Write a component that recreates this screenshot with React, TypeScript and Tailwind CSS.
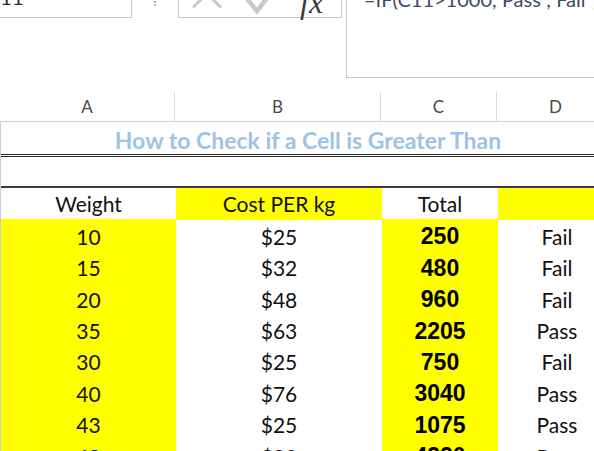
const rows = [
  ['10', '$25', '250', 'Fail'],
  ['15', '$32', '480', 'Fail'],
  ['20', '$48', '960', 'Fail'],
  ['35', '$63', '2205', 'Pass'],
  ['30', '$25', '750', 'Fail'],
  ['40', '$76', '3040', 'Pass'],
  ['43', '$25', '1075', 'Pass'],
  ['48', '$90', '4320', 'Pass'],
];

const cols = 'grid grid-cols-[175px_206px_116px_118px]';

function FormulaBar() {
  return (
    <div className="flex items-start h-[106px] -mt-[14px]">
      {/* name box */}
      <div className="flex items-start w-[132px] h-[32px] border-r border-b border-[#c6c6c6]">
        <span className="-ml-[13px] pt-[1px] text-[20px] leading-[20px] text-[#1f2a44]">C11</span>
        <svg className="ml-auto mr-[11px] mt-[9px]" width="8" height="6" viewBox="0 0 8 6">
          <path d="M1 1 L4 4.5 L7 1" fill="none" stroke="#8a8a8a" strokeWidth="1.3" />
        </svg>
      </div>
      {/* grip dots */}
      <div className="ml-[22px] mt-[11px] flex flex-col gap-[1.5px]">
        <span className="w-[2px] h-[2px] rounded-full bg-[#9a9a9a]" />
        <span className="w-[2px] h-[2px] rounded-full bg-[#9a9a9a]" />
        <span className="w-[2px] h-[2px] rounded-full bg-[#9a9a9a]" />
      </div>
      {/* cancel / enter / fx */}
      <div className="ml-[22px] flex items-start w-[164px] h-[32px] border-l border-r border-b border-[#c6c6c6]">
        <svg width="100" height="32" viewBox="0 0 100 32">
          <path d="M14 -6.5 L42 21.5 M42 -6.5 L14 21.5" stroke="#c8c8c8" strokeWidth="3" fill="none" />
          <path d="M64 8 L78 25 L97 0" stroke="#c8c8c8" strokeWidth="4.5" fill="none" strokeLinejoin="miter" />
        </svg>
        <span className="ml-[21px] font-['Liberation_Serif',serif] italic text-[32px] leading-[32px] text-[#3a3a3a]">fx</span>
      </div>
      {/* formula box */}
      <div className="ml-[4px] flex-1 h-[92px] border-l border-b border-[#c6c6c6] pl-[17px] pt-[3px] overflow-hidden whitespace-nowrap">
        <span className="text-[20px] leading-[20px] text-[#3b4b63]">=IF(C11&gt;1000,"Pass","Fail")</span>
      </div>
    </div>
  );
}

export default function App() {
  return (
    <div className="w-[594px] h-[451px] overflow-hidden bg-white font-['Lato',sans-serif] text-[#111]">
      <FormulaBar />

      {/* column headers */}
      <div className={`${cols} h-[30px] border-b border-[#cfcfcf] text-[17px] text-[#4a4a4a]`}>
        {['A', 'B', 'C', 'D'].map(c => (
          <div key={c} className="flex items-center justify-center border-r border-[#dadada]">{c}</div>
        ))}
      </div>

      <div className="w-[615px] border-l border-[#c8cade]">
        {/* title */}
        <div className="h-[32px] flex items-center justify-center pt-[4px] text-[23px] font-bold text-[#9dc3e6] whitespace-nowrap">
          How to Check if a Cell is Greater Than
        </div>
        <div className="h-[3px] border-y border-[#2a2a2a]" />
        <div className="h-[29px]" />
        <div className="h-[2px] bg-[#3a3a3a]" />

        {/* header row */}
        <div className={`${cols} h-[31.4px] text-[21px]`}>
          <div className="flex items-center justify-center">Weight</div>
          <div className="flex items-center justify-center bg-[#ffff00]">Cost PER kg</div>
          <div className="flex items-center justify-center">Total</div>
          <div className="bg-[#ffff00]" />
        </div>

        {rows.map(r => (
          <div key={r[0] + r[2]} className={`${cols} h-[31.4px] text-[21px]`}>
            <div className="flex items-center justify-center bg-[#ffff00]">{r[0]}</div>
            <div className="flex items-center justify-center">{r[1]}</div>
            <div className="flex items-center justify-center bg-[#ffff00] font-['Liberation_Sans',sans-serif] font-bold text-[23px] text-black">{r[2]}</div>
            <div className="flex items-center justify-center">{r[3]}</div>
          </div>
        ))}
      </div>
    </div>
  );
}
